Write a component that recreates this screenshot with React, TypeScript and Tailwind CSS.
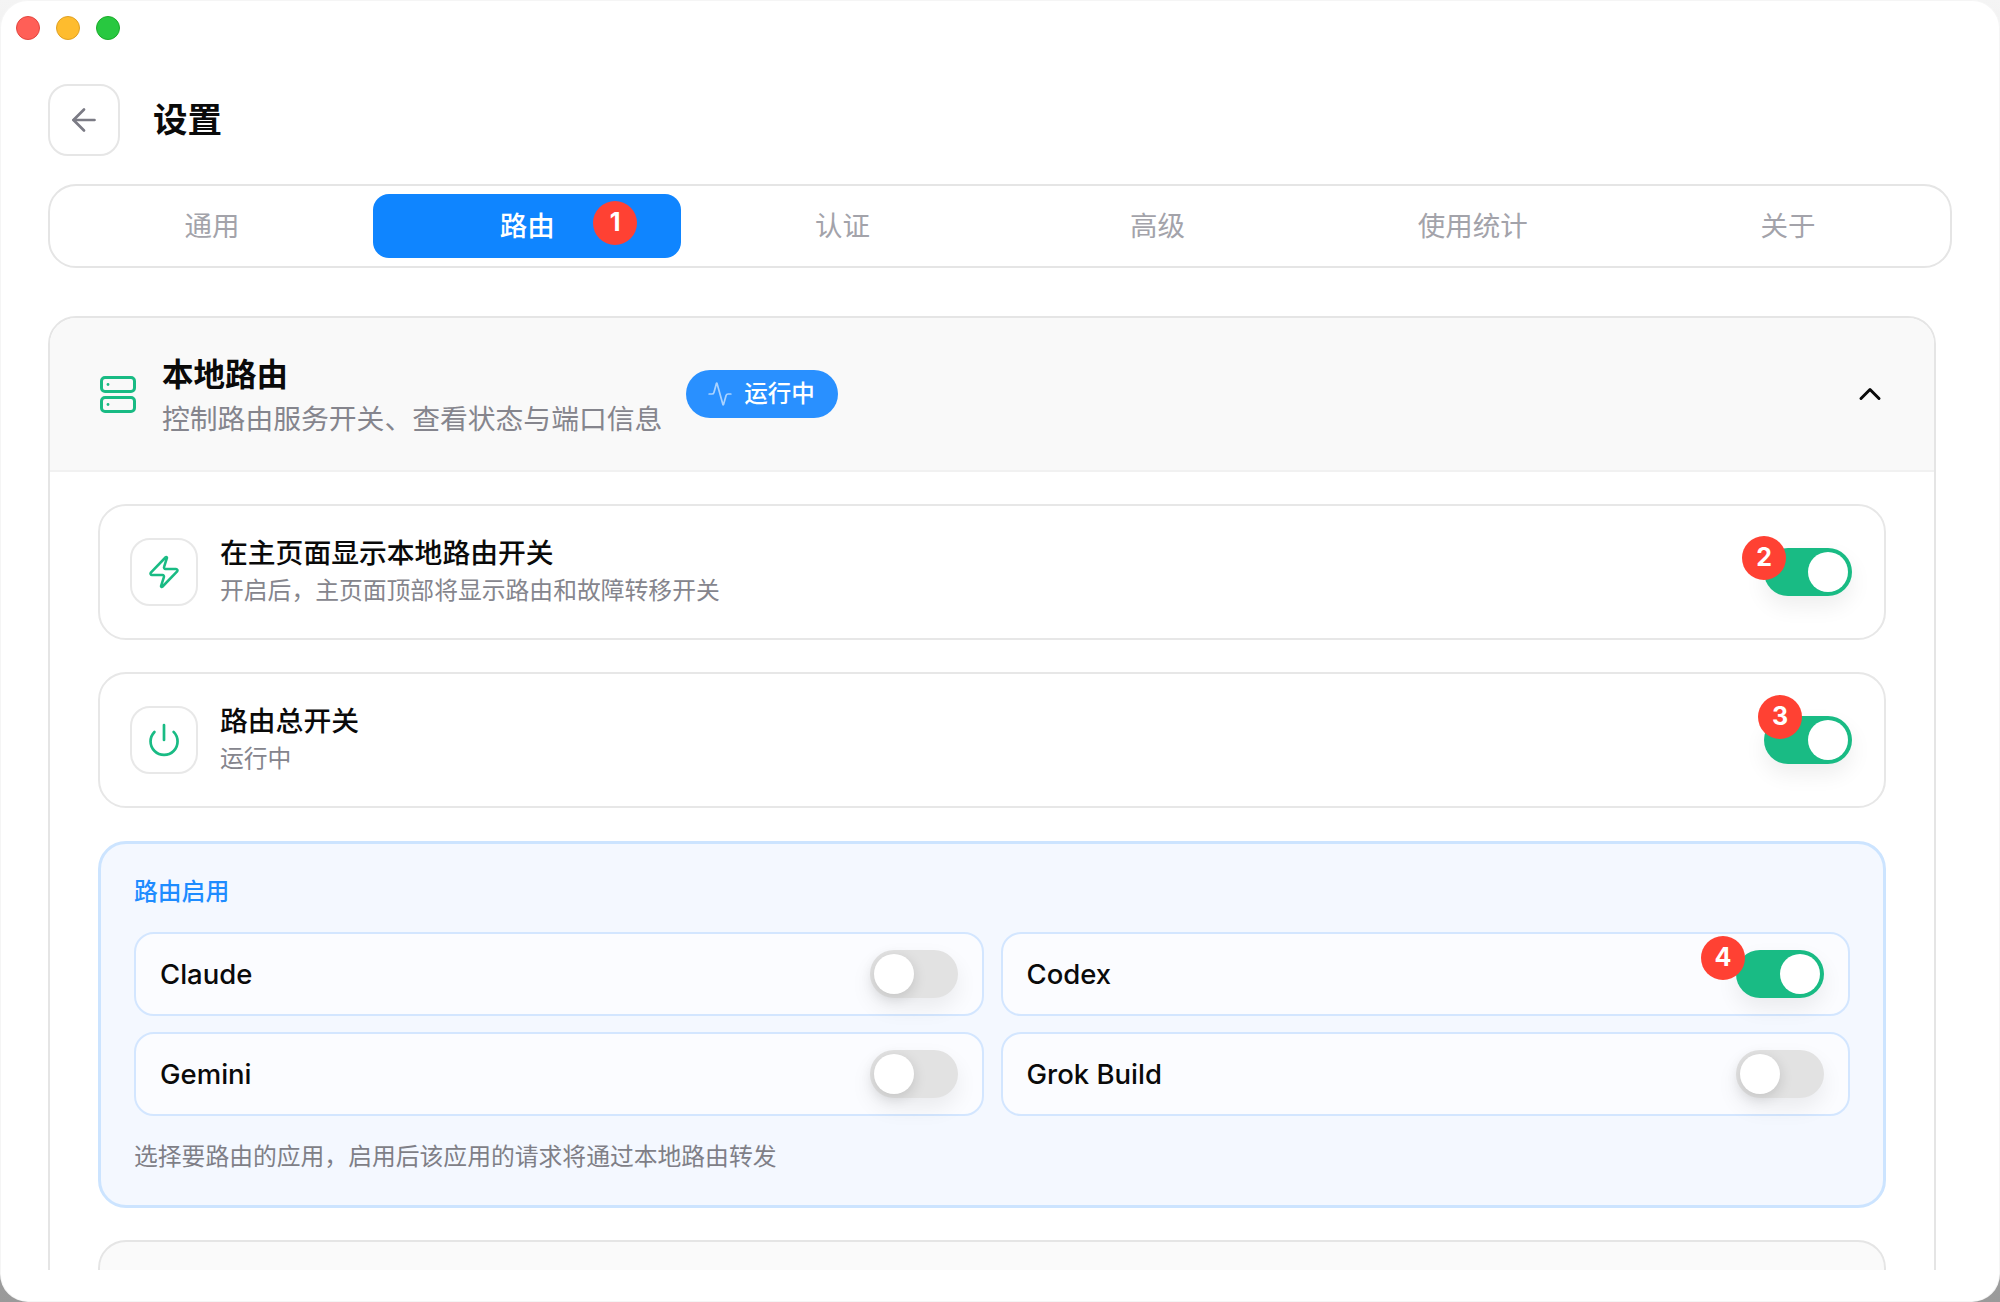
import React from 'react';
import { Activity, ArrowLeft, ChevronUp, Power, Zap } from 'lucide-react';

const tabs = ['通用', '路由', '认证', '高级', '使用统计', '关于'];

const Badge: React.FC<{ n: number; className: string }> = ({ n, className }) => (
  <span className={`absolute z-10 flex h-[44px] w-[44px] items-center justify-center rounded-full bg-[#ff4133] text-[25px] font-bold text-white ${className}`}>
    {n}
  </span>
);

const Toggle: React.FC<{ on?: boolean; badge?: React.ReactNode }> = ({ on, badge }) => (
  <div className={`relative h-[48px] w-[88px] shrink-0 rounded-full shadow-[0_10px_22px_rgba(0,0,0,0.07)] ${on ? 'bg-[#19bb84]' : 'bg-[#e2e2e2]'}`}>
    <span className={`absolute top-[4px] h-[40px] w-[40px] rounded-full bg-white ${on ? 'left-[44px]' : 'left-[4px] shadow-[0_4px_14px_rgba(0,0,0,0.14)]'}`} />
    {badge}
  </div>
);

const SettingRow: React.FC<{ icon: React.ReactNode; title: string; desc: string; badge: React.ReactNode }> = ({ icon, title, desc, badge }) => (
  <div className="flex h-[136px] items-center rounded-[28px] border-2 border-[#e7e7e7] bg-white pl-[30px] pr-[32px]">
    <div className="flex h-[68px] w-[68px] shrink-0 items-center justify-center rounded-[20px] border-2 border-[#e8e8e8] bg-white">
      {icon}
    </div>
    <div className="ml-[22px] flex-1">
      <div className="text-[27.8px] font-medium leading-[37px] text-[#0a0a0a]">{title}</div>
      <div className="text-[23.8px] leading-[37px] text-[#85858d]">{desc}</div>
    </div>
    <Toggle on badge={badge} />
  </div>
);

const AppCell: React.FC<{ name: string; on?: boolean; badge?: React.ReactNode }> = ({ name, on, badge }) => (
  <div className="flex items-center justify-between rounded-[20px] border-2 border-[#d3e6ff] bg-[#fbfcff] pl-[24px] pr-[24px]">
    <span className="mt-[2px] text-[27.5px] font-medium text-[#0a0a0a]">{name}</span>
    <Toggle on={on} badge={badge} />
  </div>
);

export default function App() {
  return (
    <div className="h-[1302px] w-[2000px] overflow-hidden bg-gradient-to-b from-[#f4f4f4] to-[#9a9a9a] font-['Inter','Noto_Sans_CJK_SC',sans-serif]">
      <div className="flex h-full flex-col overflow-hidden rounded-[28px] bg-white shadow-[inset_0_0_0_1px_rgba(0,0,0,0.04)]">
        <div className="flex h-[56px] shrink-0 items-center gap-[16px] pl-[16px]">
          <span className="h-[24px] w-[24px] rounded-full border border-[#e2463f] bg-[#ff5f57]" />
          <span className="h-[24px] w-[24px] rounded-full border border-[#dfa023] bg-[#febc2e]" />
          <span className="h-[24px] w-[24px] rounded-full border border-[#1aab29] bg-[#28c840]" />
        </div>

        <div className="flex shrink-0 items-center gap-[33px] pl-[48px] pt-[28px]">
          <button className="flex h-[72px] w-[72px] items-center justify-center rounded-[20px] border-2 border-[#e6e6e6] bg-white text-[#7b7b85]">
            <ArrowLeft size={36} strokeWidth={1.8} />
          </button>
          <h1 className="text-[34.5px] font-bold leading-[68px] text-[#0a0a0a]">设置</h1>
        </div>

        <div className="ml-[48px] mt-[28px] grid h-[84px] w-[1904px] shrink-0 grid-cols-6 gap-[7px] rounded-[28px] border-2 border-[#e5e5e5] bg-white px-[8px] py-[8px]">
          {tabs.map((tab, i) => (
            <div
              key={tab}
              className={`relative flex items-center justify-center rounded-[16px] pt-[2px] text-[27.5px] ${i === 1 ? 'bg-[#0f85ff] font-medium text-white' : 'text-[#a3a3aa]'}`}
            >
              {tab}
              {i === 1 && <Badge n={1} className="left-[220px] top-[7px]" />}
            </div>
          ))}
        </div>

        <div className="mt-[48px] h-[954px] w-[1936px] shrink-0 overflow-hidden pl-[48px]">
          <div className="rounded-t-[28px] border-2 border-[#e5e5e5] bg-white">
            <div className="flex h-[154px] items-center rounded-t-[26px] border-b-2 border-[#f1f1f1] bg-[#f9f9f9] pl-[50px] pr-[46px]">
              <svg width="36" height="37" viewBox="0 0 36 37" fill="none" stroke="#19bb84" strokeWidth="3" className="shrink-0">
                <rect x="1.5" y="1.5" width="33" height="14" rx="3.5" />
                <rect x="1.5" y="21.5" width="33" height="14" rx="3.5" />
                <circle cx="8" cy="8.5" r="1.4" fill="#19bb84" stroke="none" />
                <circle cx="8" cy="28.5" r="1.4" fill="#19bb84" stroke="none" />
              </svg>
              <div className="ml-[26px] pt-[6px]">
                <div className="text-[31.5px] font-semibold leading-[44px] text-[#0a0a0a]">本地路由</div>
                <div className="text-[27.8px] leading-[44px] text-[#85858d]">控制路由服务开关、查看状态与端口信息</div>
              </div>
              <div className="ml-[24px] flex h-[48px] w-[152px] items-center gap-[11px] rounded-full bg-[#2990ff] pl-[21px] text-[23.5px] font-medium text-white">
                <Activity size={26} strokeWidth={1.6} className="text-white/60" />
                运行中
              </div>
              <ChevronUp size={36} strokeWidth={2} className="ml-auto text-[#0a0a0a]" />
            </div>

            <div className="flex flex-col gap-[32px] px-[48px] pt-[32px]">
              <SettingRow
                icon={<Zap size={36} strokeWidth={1.7} className="text-[#19bb84]" />}
                title="在主页面显示本地路由开关"
                desc="开启后，主页面顶部将显示路由和故障转移开关"
                badge={<Badge n={2} className="-left-[22px] -top-[12px]" />}
              />
              <SettingRow
                icon={<Power size={36} strokeWidth={1.8} className="text-[#19bb84]" />}
                title="路由总开关"
                desc="运行中"
                badge={<Badge n={3} className="-left-[6px] -top-[21px]" />}
              />

              <div className="mt-[1px] h-[367px] rounded-[28px] border-[3px] border-[#cce4ff] bg-[#f4f8ff] px-[33px] pt-[31px]">
                <div className="text-[23.8px] font-medium leading-[34px] text-[#1e8cff]">路由启用</div>
                <div className="mt-[23px] grid grid-cols-2 grid-rows-[84px_84px] gap-x-[17px] gap-y-[16px]">
                  <AppCell name="Claude" />
                  <AppCell name="Codex" on badge={<Badge n={4} className="-left-[35px] -top-[14px]" />} />
                  <AppCell name="Gemini" />
                  <AppCell name="Grok Build" />
                </div>
                <div className="mt-[24px] text-[23.8px] leading-[34px] text-[#7f7f87]">选择要路由的应用，启用后该应用的请求将通过本地路由转发</div>
              </div>

              <div className="h-[120px] rounded-[28px] border-2 border-[#e5e5e5] bg-[#fafafa]" />
            </div>
          </div>
        </div>
      </div>
    </div>
  );
}
